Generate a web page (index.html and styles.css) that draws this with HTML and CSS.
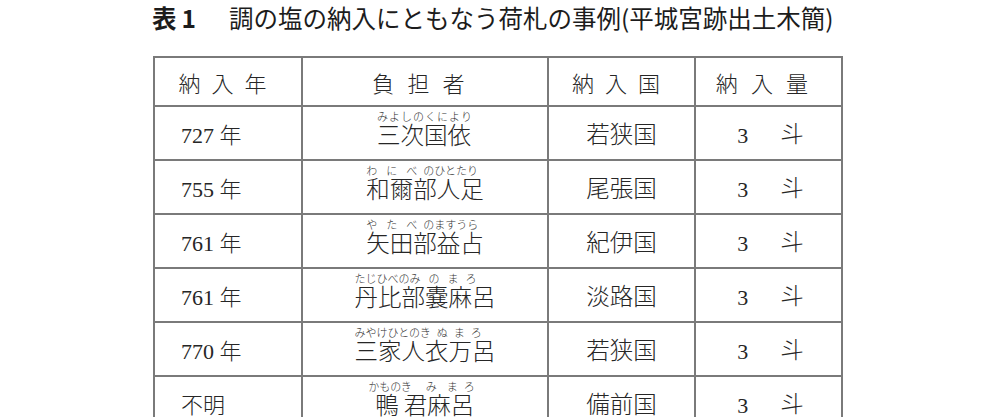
FILE: index.html
```html
<!DOCTYPE html>
<html lang="ja">
<head>
<meta charset="utf-8">
<title>表1 調の塩の納入にともなう荷札の事例</title>
<link rel="stylesheet" href="styles.css">
</head>
<body>
<div class="page">
  <h1 class="title"><span class="label">表1</span><span class="caption">調の塩の納入にともなう荷札の事例(平城宮跡出土木簡)</span></h1>
  <table class="tbl">
    <colgroup>
      <col class="c-year">
      <col class="c-name">
      <col class="c-prov">
      <col class="c-qty">
    </colgroup>
    <thead>
      <tr class="head">
        <th>納入年</th>
        <th class="wide">負担者</th>
        <th>納入国</th>
        <th class="wide">納入量</th>
      </tr>
    </thead>
    <tbody>
      <tr class="row">
        <td class="year">727 年</td>
        <td class="name"><div class="wrap"><div class="reading spread">みよしのくにより</div><div class="kanji">三次国依</div></div></td>
        <td class="prov">若狭国</td>
        <td class="qty"><span class="num">3</span><span class="unit">斗</span></td>
      </tr>
      <tr class="row">
        <td class="year">755 年</td>
        <td class="name"><div class="wrap"><div class="reading">わ<span class="s9"></span>に<span class="s9"></span>べ<span class="s6"></span>のひとたり</div><div class="kanji">和爾部人足</div></div></td>
        <td class="prov">尾張国</td>
        <td class="qty"><span class="num">3</span><span class="unit">斗</span></td>
      </tr>
      <tr class="row">
        <td class="year">761 年</td>
        <td class="name"><div class="wrap"><div class="reading">や<span class="s9"></span>た<span class="s9"></span>べ<span class="s6"></span>のますうら</div><div class="kanji">矢田部益占</div></div></td>
        <td class="prov">紀伊国</td>
        <td class="qty"><span class="num">3</span><span class="unit">斗</span></td>
      </tr>
      <tr class="row">
        <td class="year">761 年</td>
        <td class="name"><div class="wrap"><div class="reading">たじひべのみ<span class="s8"></span>の<span class="s8"></span>ま<span class="s7"></span>ろ</div><div class="kanji">丹比部嚢麻呂</div></div></td>
        <td class="prov">淡路国</td>
        <td class="qty"><span class="num">3</span><span class="unit">斗</span></td>
      </tr>
      <tr class="row">
        <td class="year">770 年</td>
        <td class="name"><div class="wrap"><div class="reading">みやけひとのき<span class="s6"></span>ぬ<span class="s6"></span>ま<span class="s6"></span>ろ</div><div class="kanji">三家人衣万呂</div></div></td>
        <td class="prov">若狭国</td>
        <td class="qty"><span class="num">3</span><span class="unit">斗</span></td>
      </tr>
      <tr class="row">
        <td class="year">不明</td>
        <td class="name"><div class="wrap"><div class="reading shift">かものき<span class="s14"></span>み<span class="s10"></span>ま<span class="s6"></span>ろ</div><div class="kanji">鴨 君麻呂</div></div></td>
        <td class="prov">備前国</td>
        <td class="qty"><span class="num">3</span><span class="unit">斗</span></td>
      </tr>
    </tbody>
  </table>
</div>
</body>
</html>
```

FILE: styles.css
```css
html, body {
  margin: 0;
  padding: 0;
  background: #ffffff;
}

body {
  color: #222222;
  font-family: "Noto Sans CJK JP", "Noto Sans", sans-serif;
}

.page {
  padding: 6px 0 0 152px;
}

.title {
  display: flex;
  margin: 0 0 26px;
  font-size: 24.5px;
  line-height: 24px;
  font-weight: 400;
  color: #1c1c1c;
}

.label {
  width: 77px;
  font-weight: 700;
  letter-spacing: 5px;
}

.tbl {
  margin-left: 1px;
  width: 690px;
  table-layout: fixed;
  border-collapse: collapse;
  font-family: "Liberation Serif", "Noto Sans CJK JP", serif;
  color: #262626;
}

.c-year { width: 148px; }
.c-name { width: 246px; }
.c-prov { width: 147px; }
.c-qty  { width: 147px; }

.tbl th,
.tbl td {
  border: 2px solid #7a7a7a;
  padding: 0;
}

.head {
  height: 49px;
}

.tbl .head th {
  font-family: "Noto Sans CJK JP", serif;
  font-weight: 300;
  font-size: 22px;
  letter-spacing: 0.5em;
  text-align: center;
  vertical-align: middle;
}

.tbl .head th.wide {
  letter-spacing: 0.6em;
}

.row {
  height: 54px;
}

.tbl .year {
  padding-left: 26px;
  font-size: 22px;
  font-weight: 300;
  text-align: left;
  vertical-align: middle;
}

.tbl .name {
  text-align: center;
  vertical-align: top;
  padding-top: 0;
}

.wrap {
  display: inline-flex;
  flex-direction: column;
  align-items: flex-start;
}

.reading {
  font-family: "Noto Sans CJK JP", sans-serif;
  font-size: 11px;
  line-height: 11px;
  font-weight: 300;
  white-space: nowrap;
  color: #333333;
}

.reading.spread {
  letter-spacing: 1px;
}

.reading.shift {
  margin-left: -7px;
}

.s6, .s7, .s8, .s9, .s10, .s14 {
  display: inline-block;
}
.s6 { width: 6px; }
.s7 { width: 7px; }
.s8 { width: 8px; }
.s9 { width: 9px; }
.s10 { width: 10px; }
.s14 { width: 14px; }

.kanji {
  font-family: "Noto Sans CJK JP", serif;
  font-size: 23.5px;
  line-height: 25px;
  font-weight: 300;
  white-space: nowrap;
}

.tbl .prov {
  font-family: "Noto Sans CJK JP", serif;
  font-size: 23.5px;
  font-weight: 300;
  text-align: center;
  vertical-align: middle;
}

.tbl .qty {
  text-align: center;
  vertical-align: middle;
  padding-left: 4px;
}

.num {
  font-size: 22px;
  margin-right: 32px;
}

.unit {
  font-family: "Noto Sans CJK JP", serif;
  font-size: 23.5px;
  font-weight: 300;
}
```
